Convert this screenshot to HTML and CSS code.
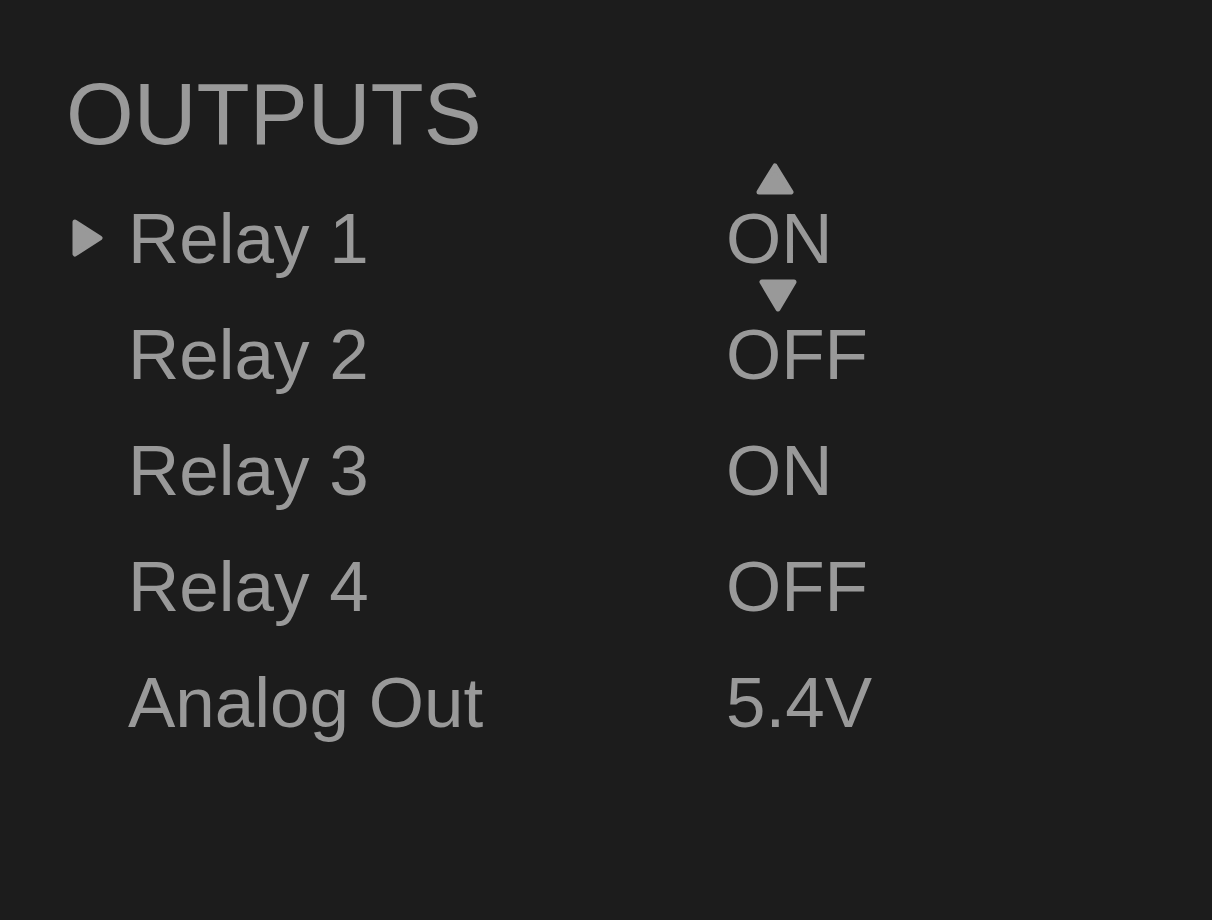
FILE: index.html
```html
<!DOCTYPE html>
<html lang="en">
<head>
    <meta charset="UTF-8">
    <meta name="viewport" content="width=device-width, initial-scale=1.0">
    <title>Outputs</title>
    <link rel="stylesheet" href="styles.css">
</head>
<body>
    <div class="screen">
        <h1 class="title">OUTPUTS</h1>

        <div class="menu">
            <div class="row selected">
                <span class="cursor">
                    <svg width="32" height="38" viewBox="0 0 32 38"><polygon points="3,3 28,19 3,35" /></svg>
                </span>
                <span class="label">Relay 1</span>
                <span class="value">
                    ON
                    <svg class="spin up" width="38" height="32" viewBox="0 0 38 32"><polygon points="19,3 35,29 3,29" /></svg>
                    <svg class="spin down" width="38" height="33" viewBox="0 0 38 33"><polygon points="3,3 35,3 19,30" /></svg>
                </span>
            </div>
            <div class="row">
                <span class="cursor"></span>
                <span class="label">Relay 2</span>
                <span class="value">OFF</span>
            </div>
            <div class="row">
                <span class="cursor"></span>
                <span class="label">Relay 3</span>
                <span class="value">ON</span>
            </div>
            <div class="row">
                <span class="cursor"></span>
                <span class="label">Relay 4</span>
                <span class="value">OFF</span>
            </div>
            <div class="row">
                <span class="cursor"></span>
                <span class="label">Analog Out</span>
                <span class="value">5.4V</span>
            </div>
        </div>
    </div>
</body>
</html>
```

FILE: styles.css
```css
body {
    margin: 0;
    background-color: #1c1c1c;
    color: #999999;
    font-family: "Liberation Sans", Arial, sans-serif;
}

.screen {
    padding: 64px 0 0 66px;
    height: 920px;
    box-sizing: border-box;
}

.title {
    margin: 0 0 17px 0;
    font-size: 87px;
    font-weight: normal;
    line-height: 100px;
}

.menu {
    padding-left: 6px;
}

.row {
    display: grid;
    grid-template-columns: 56px 598px auto;
    height: 116px;
    font-size: 71px;
    line-height: 116px;
}

.cursor {
    display: flex;
    align-items: center;
    padding-bottom: 2px;
}

.cursor svg,
.spin {
    fill: #999999;
    stroke: #999999;
    stroke-width: 5;
    stroke-linejoin: round;
}

.value {
    position: relative;
}

.spin {
    position: absolute;
}

.spin.up {
    left: 30px;
    top: -18px;
}

.spin.down {
    left: 33px;
    top: 98px;
}
```
